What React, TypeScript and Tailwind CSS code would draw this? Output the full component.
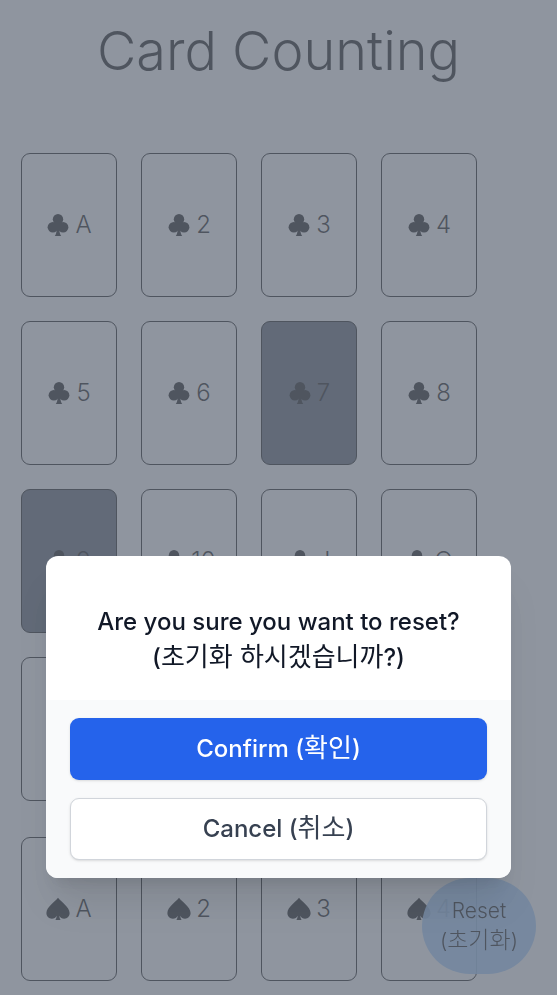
import { useState } from "react";
import type { ReactNode } from "react";

type Suit = "club" | "spade";

const CLUBS = ["A", "2", "3", "4", "5", "6", "7", "8", "9", "10", "J", "Q", "K"];
const SPADES = ["A", "2", "3", "4"];

function SuitIcon({ suit }: { suit: Suit }) {
  return (
    <svg viewBox="0 0 24 24" className="size-6 shrink-0" fill="currentColor" aria-hidden="true">
      {suit === "club" ? (
        <>
          <circle cx="12" cy="6.2" r="5.2" />
          <circle cx="6.900" cy="14.2" r="5.3" />
          <circle cx="17.100" cy="14.2" r="5.3" />
          <path d="M10 9h4l-.6 8c.1 2.400.6 4.300 1.800 6H8.800c1.200-1.700 1.700-3.600 1.800-6z" />
        </>
      ) : (
        <path d="M12 .8C14.500 4.600 23.600 9.800 23.600 16c0 3.300-2.400 5.700-5.500 5.700-2.100 0-3.900-1.100-4.800-2.900.1 1.800.5 3.100 1.300 4.200H9.400c.8-1.100 1.200-2.400 1.300-4.200-.9 1.800-2.700 2.900-4.800 2.900C2.800 21.700.4 19.300.4 16 .4 9.800 9.500 4.600 12 .8z" />
      )}
    </svg>
  );
}

function Hangul({ children }: { children: ReactNode }) {
  return (
    <span lang="ko" className="font-['Noto_Sans_CJK_KR',sans-serif] text-[26px] leading-none font-normal">
      {children}
    </span>
  );
}

function Deck({
  suit,
  ranks,
  used,
  onToggle,
}: {
  suit: Suit;
  ranks: string[];
  used: string[];
  onToggle: (id: string) => void;
}) {
  return (
    <section aria-label={suit} className="flex flex-wrap gap-6">
      {ranks.map((rank) => {
        const id = `${suit}-${rank}`;
        return (
          <button
            key={id}
            type="button"
            onClick={() => onToggle(id)}
            className={`flex h-36 w-24 items-center justify-center gap-[5px] rounded-[9px] border border-black text-2xl font-light ${
              used.includes(id) ? "bg-[#4b5563]" : "bg-white"
            }`}
          >
            <SuitIcon suit={suit} />
            <span>{rank}</span>
          </button>
        );
      })}
    </section>
  );
}

export default function App() {
  const [used, setUsed] = useState<string[]>(["club-7", "club-9"]);
  const [open, setOpen] = useState(true);

  const toggle = (id: string) =>
    setUsed((list) => (list.includes(id) ? list.filter((item) => item !== id) : [...list, id]));

  return (
    <div className="min-h-screen bg-white font-['Inter','Noto_Sans_CJK_KR',sans-serif] text-black">
      <main className="px-[21px] pt-3 pb-3.5">
        <h1 className="text-center text-[54px] leading-[78px] font-light">Card Counting</h1>
        <div className="mt-[63px] flex flex-col gap-9">
          <Deck suit="club" ranks={CLUBS} used={used} onToggle={toggle} />
          <Deck suit="spade" ranks={SPADES} used={used} onToggle={toggle} />
        </div>
      </main>

      <button
        type="button"
        onClick={() => setOpen(true)}
        className="fixed right-[21px] bottom-[21px] rounded-full bg-[rgb(147,197,253,0.9)] p-[18px] text-[21px] leading-[30px] font-light"
      >
        Reset
        <br />
        (<span lang="ko" className="text-[23px] leading-none">초기화</span>)
      </button>

      {open && (
        <div className="fixed inset-0 flex items-end justify-center bg-[rgb(106,114,127,0.75)] px-[46px] pb-[117px]">
          <div
            role="dialog"
            aria-modal="true"
            aria-labelledby="reset-title"
            className="w-full max-w-3xl rounded-xl bg-white shadow-[0_30px_38px_-8px_rgb(0_0_0/0.1),0_12px_15px_-9px_rgb(0_0_0/0.1)]"
          >
            <h2
              id="reset-title"
              className="px-6 pt-12 pb-6 text-center text-2xl leading-9 font-medium text-[#111827]"
            >
              Are you sure you want to reset?
              <br />
              (<Hangul>초기화 하시겠습니까</Hangul>?)
            </h2>
            <div className="flex flex-col gap-[18px] rounded-b-xl bg-[#f9fafb] px-6 py-[18px]">
              <button
                type="button"
                onClick={() => {
                  setUsed([]);
                  setOpen(false);
                }}
                className="rounded-[9px] border border-transparent bg-[#2563eb] py-3 text-2xl leading-9 font-medium text-white shadow-sm"
              >
                Confirm (<Hangul>확인</Hangul>)
              </button>
              <button
                type="button"
                onClick={() => setOpen(false)}
                className="rounded-[9px] border border-[#d1d5db] bg-white py-3 text-2xl leading-9 font-medium text-[#374151] shadow-sm"
              >
                Cancel (<Hangul>취소</Hangul>)
              </button>
            </div>
          </div>
        </div>
      )}
    </div>
  );
}
